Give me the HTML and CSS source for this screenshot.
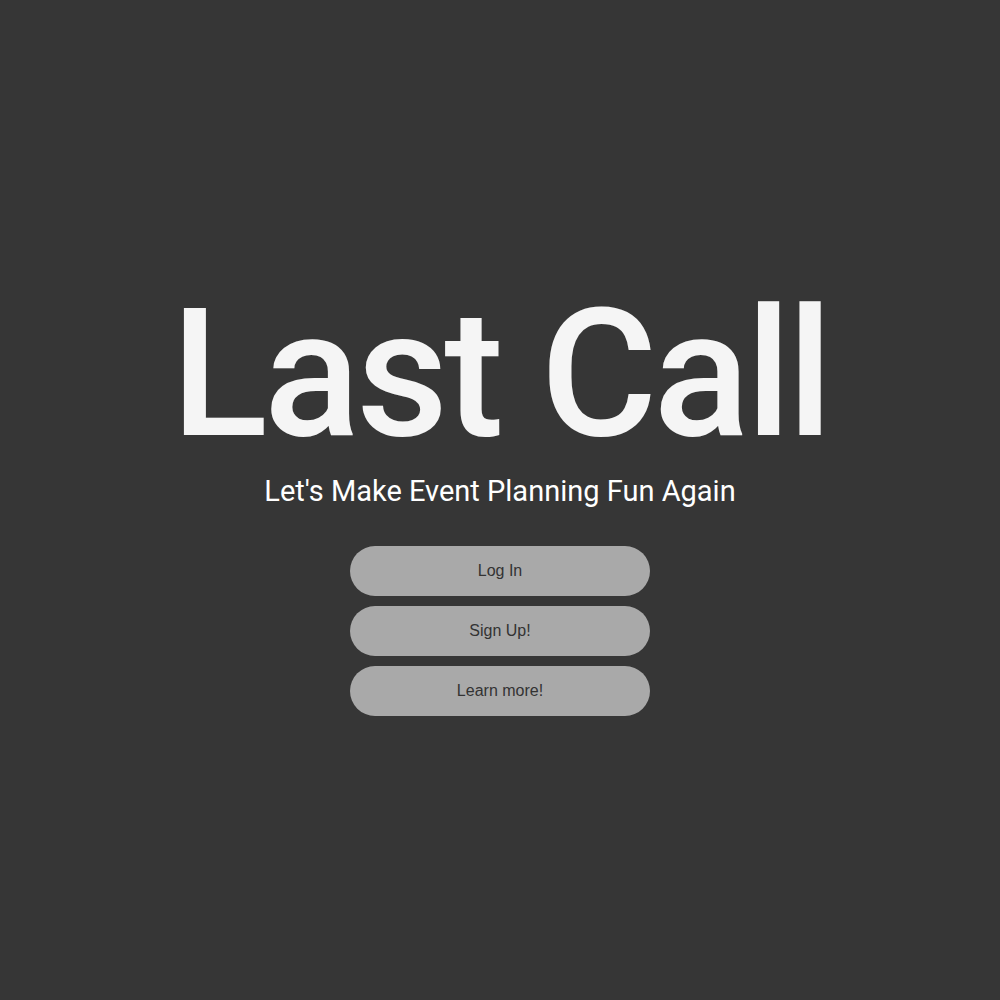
FILE: index.html
```html
<!DOCTYPE html>
<html lang="en">
<head>
<meta charset="utf-8">
<title>Last Call</title>
<link rel="stylesheet" href="styles.css">
</head>
<body>
<main class="hero">
  <h1 class="title">Last Call</h1>
  <p class="tagline">Let's Make Event Planning Fun Again</p>
  <div class="actions">
    <button class="btn">Log In</button>
    <button class="btn">Sign Up!</button>
    <button class="btn">Learn more!</button>
  </div>
</main>
</body>
</html>
```
FILE: styles.css
```css
html, body {
  margin: 0;
  padding: 0;
  height: 100%;
}
body {
  background: #363636;
  font-family: "Roboto", "Liberation Sans", sans-serif;
}
.hero {
  box-sizing: border-box;
  height: 100vh;
  padding-top: 1px;
  display: flex;
  flex-direction: column;
  align-items: center;
  justify-content: center;
}
.title {
  margin: 0;
  color: #f5f5f5;
  font-size: 179px;
  font-weight: 500;
  line-height: 1;
  letter-spacing: -4px;
}
.tagline {
  margin: 10px 0 38px;
  color: #ffffff;
  font-size: 29px;
  line-height: 1.2;
}
.actions {
  display: flex;
  flex-direction: column;
  gap: 10px;
}
.btn {
  width: 300px;
  height: 50px;
  border: none;
  border-radius: 25px;
  background: #a9a9a9;
  color: #333;
  font-family: "Liberation Sans", Arial, sans-serif;
  font-size: 16px;
}
```
